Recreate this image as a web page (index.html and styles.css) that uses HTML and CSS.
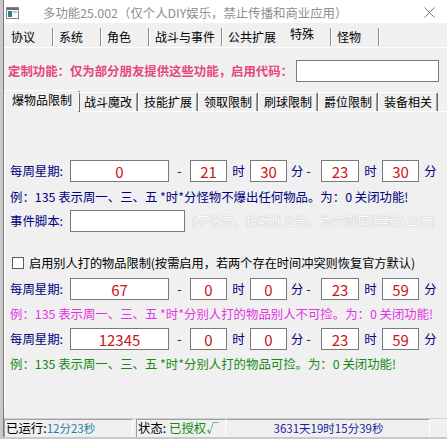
FILE: index.html
```html
<!DOCTYPE html>
<html lang="zh">
<head>
<meta charset="utf-8">
<title>多功能25.002</title>
<link rel="stylesheet" href="styles.css">
</head>
<body>
<div class="window">
  <div class="titlebar">
    <svg class="icon" width="13" height="12" viewBox="0 0 13 12">
      <rect x="0.5" y="0.5" width="12" height="11" fill="#fff" stroke="#8a8a8a"/>
      <rect x="1" y="1" width="11" height="2" fill="#6b6b6b"/>
      <rect x="2" y="4" width="4" height="6" fill="#2f7f86"/>
      <rect x="7" y="4" width="4" height="2" fill="#b8c8c8"/>
    </svg>
    <span class="title">多功能25.002（仅个人DIY娱乐，禁止传播和商业应用）</span>
    <svg class="close" width="11" height="11" viewBox="0 0 11 11">
      <path d="M0.5 0.5 L10.5 10.5 M10.5 0.5 L0.5 10.5" stroke="#7a7a7a" stroke-width="1" fill="none"/>
    </svg>
  </div>

  <div class="tabs1">
    <div class="t1">协议</div>
    <div class="t1">系统</div>
    <div class="t1">角色</div>
    <div class="t1">战斗与事件</div>
    <div class="t1 pre">公共扩展</div>
    <div class="t1 sel">特殊</div>
    <div class="t1">怪物</div>
  </div>

  <div class="panel1">
    <div class="custom">
      <span class="pink">定制功能：仅为部分朋友提供这些功能，启用代码：</span>
      <div class="box code"></div>
    </div>

    <div class="tabs2">
      <div class="t2 sel">爆物品限制</div>
      <div class="t2">战斗魔改</div>
      <div class="t2">技能扩展</div>
      <div class="t2">领取限制</div>
      <div class="t2">刷球限制</div>
      <div class="t2">爵位限制</div>
      <div class="t2">装备相关</div>
    </div>

    <div class="panel2">
      <div class="row r1">
        <span class="lbl">每周星期:</span>
        <div class="box w1">0</div>
        <span class="dash">-</span>
        <div class="box w2">21</div>
        <span class="unit">时</span>
        <div class="box w2">30</div>
        <span class="unit2">分 -</span>
        <div class="box w3">23</div>
        <span class="unit">时</span>
        <div class="box w2">30</div>
        <span class="unit">分</span>
      </div>
      <div class="ex navy ex1">例：135 表示周一、三、五 *时*分怪物不爆出任何物品。为：0 关闭功能!</div>
      <div class="row r2">
        <span class="lbl">事件脚本:</span>
        <div class="box w4"></div>
        <span class="faded">(不设置，按默认公告。为空则取消默认公告)</span>
      </div>
      <div class="check-row">
        <span class="check"></span>
        <span>启用别人打的物品限制(按需启用，若两个存在时间冲突则恢复官方默认)</span>
      </div>
      <div class="row r3">
        <span class="lbl">每周星期:</span>
        <div class="box w1">67</div>
        <span class="dash">-</span>
        <div class="box w2">0</div>
        <span class="unit">时</span>
        <div class="box w2">0</div>
        <span class="unit2">分 -</span>
        <div class="box w3">23</div>
        <span class="unit">时</span>
        <div class="box w2">59</div>
        <span class="unit">分</span>
      </div>
      <div class="ex magenta ex2">例：135 表示周一、三、五 *时*分别人打的物品别人不可捡。为：0 关闭功能!</div>
      <div class="row r4">
        <span class="lbl">每周星期:</span>
        <div class="box w1">12345</div>
        <span class="dash">-</span>
        <div class="box w2">0</div>
        <span class="unit">时</span>
        <div class="box w2">0</div>
        <span class="unit2">分 -</span>
        <div class="box w3">23</div>
        <span class="unit">时</span>
        <div class="box w2">59</div>
        <span class="unit">分</span>
      </div>
      <div class="ex green ex3">例：135 表示周一、三、五 *时*分别人打的物品可捡。为：0 关闭功能!</div>
    </div>
  </div>

  <div class="statusbar">
    <div class="sp sp1">已运行:<span class="teal">12分23秒</span></div>
    <div class="sp sp2">状态: <span class="ok">已授权√</span></div>
    <div class="sp sp3"><span class="blue">3631天19时15分39秒</span></div>
  </div>
</div>
</body>
</html>
```

FILE: styles.css
```css
* { box-sizing: border-box; }
html, body { margin: 0; padding: 0; }
body {
  width: 447px;
  height: 439px;
  overflow: hidden;
  background: #c9c9c9;
  font-family: "Noto Sans CJK SC", "Microsoft YaHei", sans-serif;
  font-size: 12.4px;
  color: #000;
}
.window {
  margin-left: 3px;
  width: 444px;
  height: 437px;
  background: #f0f0f0;
  border-left: 1px solid #7a7a7a;
  display: flex;
  flex-direction: column;
}
.titlebar {
  height: 23px;
  flex: none;
  background: #fff;
  display: flex;
  align-items: center;
}
.icon { margin-left: 2px; margin-top: 2px; flex: none; }
.title { margin-left: 24px; color: #8e8e8e; font-size: 12.4px; line-height: 14px; margin-top: 3px; white-space: nowrap; }
.close { margin-left: auto; margin-right: 12px; margin-top: 2px; flex: none; }

.tabs1 {
  display: flex;
  height: 20px;
  margin-top: 4px;
  padding-left: 1px;
  flex: none;
}
.t1 {
  min-width: 48px;
  height: 18px;
  margin-top: 1px;
  padding: 0 6px;
  line-height: 18px;
  font-size: 12px;
  border-right: 1px solid #8a8a8a;
  box-shadow: 1px 0 0 #fff;
  white-space: nowrap;
  flex: none;
}
.t1.pre { border-right-color: transparent; box-shadow: none; }
.t1.sel { line-height: 12px; padding-left: 7px; }

.panel1 {
  border-top: 1px solid #fff;
  flex: none;
}
.custom {
  display: flex;
  align-items: center;
  height: 22px;
  margin-top: 12px;
  padding-left: 4px;
}
.pink { color: #e8457c; font-weight: bold; white-space: nowrap; }
.box {
  background: #fff;
  border: 1px solid #7a7a7a;
  height: 22px;
  display: flex;
  align-items: center;
  justify-content: center;
  color: #cc1414;
  font-size: 15px;
  flex: none;
}
.code { width: 143px; margin-left: 3px; }

.tabs2 {
  display: flex;
  align-items: flex-end;
  height: 21px;
  margin-top: 8px;
  padding-left: 2px;
  position: relative;
  z-index: 1;
}
.t2 {
  height: 19px;
  padding: 0 5px;
  line-height: 18px;
  font-size: 12px;
  border-top: 1px solid #fff;
  border-left: 1px solid #fff;
  border-right: 1px solid #696969;
  box-shadow: inset -1px 0 0 #a0a0a0;
  border-radius: 2px 2px 0 0;
  white-space: nowrap;
  flex: none;
}
.t2.sel {
  height: 22px;
  margin-left: -2px;
  margin-right: -2px;
  padding: 0 7px;
  line-height: 18px;
  margin-bottom: -1px;
  background: #f0f0f0;
}
.panel2 {
  height: 298px;
  border-top: 1px solid #fff;
  border-left: 1px solid #fff;
  padding-left: 5px;
  padding-top: 48px;
}
.row {
  display: flex;
  align-items: center;
  height: 22px;
  color: #000080;
}
.lbl { width: 60px; flex: none; white-space: nowrap; }
.w1 { width: 99px; }
.w2 { width: 37px; }
.w3 { width: 38px; }
.w4 { width: 115px; }
.dash { width: 21px; text-align: center; flex: none; }
.unit { width: 23px; text-align: center; flex: none; }
.unit2 { width: 34px; text-align: left; padding-left: 4px; flex: none; white-space: pre; }
.ex { height: 16px; line-height: 16px; white-space: nowrap; }
.navy { color: #000080; }
.magenta { color: #e234e2; }
.green { color: #168a16; }
.ex1 { margin-top: 7px; }
.r2 { margin-top: 5px; }
.faded {
  margin-left: 7px;
  color: #ffffff;
  text-shadow: 0 0 1px #b8b8b8, 0 0 1px #c8c8c8;
  white-space: nowrap;
}
.check-row {
  display: flex;
  align-items: center;
  height: 16px;
  margin-top: 23px;
  padding-left: 2px;
  white-space: nowrap;
  font-size: 12.2px;
}
.check {
  width: 12px;
  height: 12px;
  border: 1px solid #5a5a5a;
  background: #fff;
  margin-right: 5px;
  flex: none;
}
.r3 { margin-top: 7px; }
.ex2 { margin-top: 6px; }
.r4 { margin-top: 6px; }
.ex3 { margin-top: 6px; }

.statusbar {
  margin-top: auto;
  height: 19px;
  display: flex;
  border-top: 1px solid #d0d0d0;
  flex: none;
}
.sp {
  height: 18px;
  line-height: 17px;
  border-top: 1px solid #a0a0a0;
  border-left: 1px solid #a0a0a0;
  border-right: 1px solid #fff;
  padding-left: 1px;
  white-space: nowrap;
  flex: none;
}
.sp1 { width: 129px; margin-right: 3px; }
.sp2 { width: 90px; }
.sp3 { width: 204px; text-align: center; border-left-color: transparent; }
.teal { color: #1a7fa4; font-size: 11.5px; }
.ok { color: #118a11; }
.blue { color: #1d1d9a; font-size: 11.5px; }
```
